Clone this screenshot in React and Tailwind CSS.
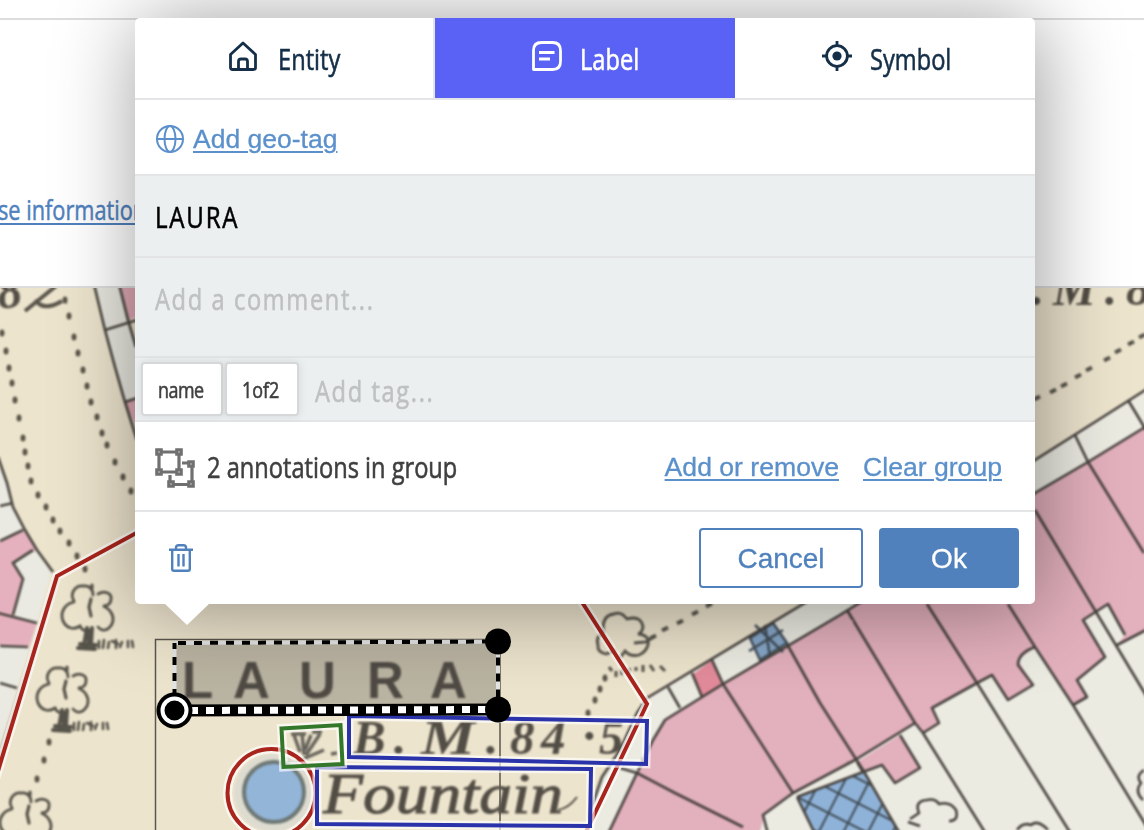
import React from "react";

const pathDots = [
  [2, 333], [6, 351], [9, 368], [12, 383], [15, 400], [19, 418], [23, 438], [25, 452], [28, 466], [31, 481], [38, 495],
  [46, 507], [53, 520], [60, 531], [69, 543], [77, 556], [85, 569], [65, 300], [69, 316], [74, 337], [78, 353], [83, 370],
  [87, 386], [91, 402], [97, 417], [102, 433], [107, 445], [115, 462], [123, 477], [131, 491],
  [49, 742], [44, 760], [37, 779], [605, 678], [600, 689], [595, 700], [588, 713],
];
const slopeDots = [
  [653, 637], [665, 629], [680, 622], [695, 613], [709, 605],
  [1037, 398], [1053, 391], [1064, 385], [1078, 376], [1089, 369], [1107, 359], [1118, 351], [1131, 343], [1142, 336],
];

function Tree({ x, y }) {
  return (
    <g transform={`translate(${x} ${y})`} fill="none" stroke="#56534a" strokeWidth="2.8" strokeLinecap="round">
      <path d="M12 16C7 8 14 0 21 1C27 0 31 4 31 10M36 9C42 5 50 8 49 14C49 19 45 21 41 21C49 24 53 32 50 39C46 46 40 47 36 42M12 17C2 19-2 28 1 36C5 44 12 45 18 41C20 46 25 47 30 44" />
      <path d="M29 14L27 22L29 31M30 0V3" strokeWidth="3.2" />
      <path d="M25 43L22 60M30 43L29 60M27 46V58M16 63L33 64M18 59L34 60" strokeWidth="4" />
      <path d="M37 56V63M42 55L41 63M47 57L46 63M50 56L56 59M54 55V63M60 57L58 62M66 56V62M70 56L71 62" strokeWidth="2.6" />
    </g>
  );
}

function MapView() {
  return (
    <svg className="block w-full flex-1" viewBox="0 288 1144 542" preserveAspectRatio="none">
      <defs>
        <pattern id="hatch" width="22" height="22" patternUnits="userSpaceOnUse" patternTransform="translate(838 792) rotate(27)">
          <path d="M0 0H22M0 0V22" stroke="#3e4a52" strokeWidth="4" />
        </pattern>
        <filter id="ink" x="0" y="0" width="100%" height="100%" colorInterpolationFilters="sRGB">
          <feTurbulence type="fractalNoise" baseFrequency="0.2" numOctaves="2" result="n" />
          <feDisplacementMap in="SourceGraphic" in2="n" scale="1.4" xChannelSelector="R" yChannelSelector="G" />
          <feGaussianBlur stdDeviation="0.8" />
        </filter>
      </defs>
      <g filter="url(#ink)">
        <rect x="-10" y="278" width="1164" height="562" fill="#ede4cd" />
        {/* west parcels */}
        <path d="M-5 457L7 483L13 507L25 530L52 570L0 745H-5Z" fill="#ebeae2" />
        <path d="M-5 543L23 530L37 550L13 563L23 579L13 615L37 623L29 647L-5 645Z" fill="#e5b1be" />
        <path d="M120 280L128 320L137 317V280ZM125 402L137 398V428Z" fill="#dfa9b4" />
        <path d="M94 280L105 330L125 402L137 398V345L128 320L118 280Z" fill="#e8e7df" />
        <g fill="none" stroke="#4c4841" strokeWidth="2.7">
          <path d="M-2 457L7 483L13 507L25 530L37 550L53 572M0 506L13 503M0 541L23 530M33 550L13 563L23 579L13 615M-2 613L37 623M0 646L28 647M0 683L17 688" />
          <path d="M93 280L105 330L115 367L125 402L137 440M118 280L128 320L136 347M105 330L137 320M125 402L137 398" />
        </g>
        <path d="M57 577L-2 763" stroke="#a9a69c" strokeWidth="5" />
        {/* east terrace */}
        <path d="M647 698L803 604L1035 460L1150 387V840H590L590 813L602 777L620 750Z" fill="#ecebe2" />
        <path d="M723 684L840 615L1035 493L1088 462L1150 424V628L1117 645L1125 635L1108 604L1083 620L1105 657L1077 680L1087 697L1073 705L1035 647L1018 660L1033 685L1008 700L992 675L977 683L932 708L939 723L923 733L915 723L855 760L793 793L765 812L758 840H606L637 773L653 740L665 720Z" fill="#e3b0bd" />
        <path d="M857 762L900 735L920 768L895 783L882 765L863 772Z" fill="#e3b0bd" />
        <path d="M692 675L712 660L722 685L702 697Z" fill="#e38b9b" />
        <path d="M750 638L773 623L787 643L760 660Z" fill="#86a6c8" />
        <path d="M750 638L773 623L787 643L760 660ZM755 625L783 652M749 651L783 630M765 625L770 657" fill="none" stroke="#43505a" strokeWidth="2.5" />
        <path d="M797 797L863 772L900 835H815Z" fill="#8fb2d8" />
        <path d="M797 797L863 772L900 835H815Z" fill="url(#hatch)" />
        <g fill="none" stroke="#46413d" strokeWidth="2.6" strokeLinejoin="round">
          <path d="M590 820L592 806L602 777L620 750L637 713L647 698L803 604L1035 460L1095 422L1150 387" />
          <path d="M608 834L637 773L653 740L665 720L723 684L840 615L1035 493L1088 462L1150 424" />
          <path d="M668 687L680 708M692 673L702 697M712 660L723 684L793 793M787 644L820 703L863 770L900 834M847 610L915 723L923 733L986 834M927 604L977 683L1071 834M1008 604L1035 647L1073 705L1150 832M1035 510L1093 607L1150 702M1075 435L1088 462L1144 553M1128 400L1146 430" />
          <path d="M620 768L637 773L675 793L743 827M768 834L763 815L793 793L855 760L915 723M797 797L815 834M797 797L863 772M857 762L863 772L882 765L895 783L920 768L900 735M923 733L939 723L932 708L977 683L992 675L1008 700L1033 685L1018 665Q1018 653 1035 647M1073 705L1087 697L1077 680L1105 657L1083 620L1108 604L1125 635M1117 645L1150 628" />
          <path d="M910 819L919 813Q914 801 927 800Q935 798 939 804Q950 801 956 810Q959 821 949 821M908 822L920 826M1017 830Q1023 822 1031 825Q1038 819 1048 830M1144 770Q1135 776 1141 783Q1134 791 1143 800" />
        </g>
        {/* paths and trees */}
        <g fill="#5a5548">
          {pathDots.map(([x, y]) => <ellipse key={`${x}-${y}`} cx={x} cy={y} rx="2.5" ry="3.5" />)}
        </g>
        <g stroke="#57534a" strokeWidth="4">
          {slopeDots.map(([x, y]) => <path key={x} d={`M${x - 3} ${y + 1.5}L${x + 3} ${y - 1.5}`} />)}
        </g>
        <Tree x={62} y={585} />
        <Tree x={37} y={667} />
        <Tree x={0} y={792} />
        <g fill="none" stroke="#56534a" strokeWidth="2.8">
          <path d="M603 632Q602 615 614 614Q621 611 627 619Q641 615 643 627Q642 633 638 634Q650 635 648 645Q646 652 639 655Q630 657 625 651L620 658M605 632Q595 636 598 645Q597 652 606 654L616 650M634 643L646 642L655 636" />
          <path d="M609 667L612 671M616 671V677M622 669V675M629 668V674M636 667V671M643 665V672M650 665L654 671M660 666L665 671" strokeWidth="3" />
        </g>
        {/* survey lettering */}
        <g fill="#524d45" fontFamily="Liberation Serif, serif" fontStyle="italic" fontWeight="bold">
          <text x="-1" y="309" fontSize="50" transform="rotate(-8 0 309)">8</text>
          <path d="M25 311L56 286M35 300Q44 312 62 301" fill="none" stroke="#5a554c" strokeWidth="4" />
          <text x="1032" y="305" fontSize="48" textLength="118">.M.8</text>
          <text y="754" fontSize="49"><tspan x="353">B</tspan><tspan x="394">.</tspan><tspan x="421" textLength="54" lengthAdjust="spacingAndGlyphs">M</tspan><tspan x="486">.</tspan><tspan x="510">8</tspan><tspan x="541">4</tspan><tspan x="585" dy="-14">.</tspan><tspan x="599" dy="14">5</tspan></text>
          <text x="323" y="813" fontSize="56" fontWeight="normal" stroke="#524d45" strokeWidth="1" textLength="240" lengthAdjust="spacingAndGlyphs">Fountain</text>
          <path d="M558 810Q569 808 577 797" fill="none" stroke="#524d45" strokeWidth="2" />
        </g>
        <path d="M294 735L300 752M302 733L304 755M320 734L306 755M296 762L324 750M331 754L337 753M291 734H306M312 732H322M311 735L305 750" fill="none" stroke="#66635a" strokeWidth="3.5" />
        <circle cx="273" cy="793" r="39" fill="#dedcd0" />
        <circle cx="274" cy="792" r="30" fill="#93b5d8" stroke="#6d7774" strokeWidth="4" />
      </g>

      <path d="M155.500 835V639.500H500V835" fill="none" stroke="#5b574e" strokeWidth="1.5" />

      <g fill="none" strokeLinejoin="miter">
        <path d="M140 531L57 576L-5 781M580 599L647 704L584 836" stroke="#fff" strokeOpacity=".65" strokeWidth="9" />
        <path d="M140 531L57 576L-5 781M580 599L647 704L584 836" stroke="#a9241c" strokeWidth="4" />
        <circle cx="271.500" cy="793" r="44" stroke="#fff" strokeOpacity=".65" strokeWidth="9" />
        <circle cx="271.500" cy="793" r="44" stroke="#a9241c" strokeWidth="4" />
        <path d="M349 716L647 721L646 764L349 757ZM317 767L591 769L590 826L317 824Z" stroke="#fff" strokeOpacity=".65" strokeWidth="9" />
        <path d="M349 716L647 721L646 764L349 757ZM317 767L591 769L590 826L317 824Z" stroke="#2b33ab" strokeWidth="4" />
        <path d="M281.500 728.500L340.500 725L342.500 764L283.500 767Z" stroke="#fff" strokeOpacity=".65" strokeWidth="9" />
        <path d="M281.500 728.500L340.500 725L342.500 764L283.500 767Z" stroke="#33772a" strokeWidth="4" />
      </g>

      <path d="M174.500 643L498 641.500V709.500L174.500 711Z" fill="#252525" fillOpacity=".25" />
      <g filter="url(#ink)" fill="#4f4b44" fontFamily="Liberation Sans, sans-serif" fontWeight="bold">
        <text y="697.500" fontSize="51"><tspan x="182">L</tspan><tspan x="233">A</tspan><tspan x="299">U</tspan><tspan x="367">R</tspan><tspan x="430">A</tspan></text>
      </g>
      <g fill="none" strokeWidth="4">
        <path d="M174.500 711V643L498 641.500V709" stroke="#e4e4e4" />
        <path d="M178 643L498 641.500V709" stroke="#000" strokeDasharray="8 8" />
        <path d="M174.500 711V643" stroke="#000" strokeDasharray="8 8" strokeDashoffset="2" />
        <path d="M174.500 710.500L498 709.500" stroke="#000" strokeWidth="12" />
        <path d="M190 710.500L487 709.500" stroke="#fff" strokeWidth="7" strokeDasharray="8 8" />
      </g>
      <circle cx="498" cy="641.500" r="13" />
      <circle cx="498" cy="709.500" r="13" />
      <circle cx="174.500" cy="710.500" r="18" />
      <circle cx="174.500" cy="710.500" r="12" fill="#000" stroke="#fff" strokeWidth="4" />
    </svg>
  );
}

function Narrow({ box, children }) {
  return (
    <span className={`${box} inline-flex shrink-0 whitespace-nowrap`}>
      <span className="inline-block origin-left scale-x-[0.815] [-webkit-text-stroke:0.6px_currentColor]">{children}</span>
    </span>
  );
}

function HomeIcon() {
  return (
    <svg className="size-[30px]" viewBox="0 0 30 30" fill="none" stroke="currentColor" strokeWidth="2.8" strokeLinejoin="round">
      <path d="M15 2L27.500 13.500V26.500Q27.500 28.500 25.500 28.500H4.500Q2.500 28.500 2.500 26.500V13.500Z" />
      <path d="M10.500 28V20.500Q10.500 18 13 18H17Q19.500 18 19.500 20.500V28" />
    </svg>
  );
}

function LabelIcon() {
  return (
    <svg className="size-[30px]" viewBox="0 0 30 30" fill="none" stroke="currentColor" strokeWidth="2.8" strokeLinejoin="round">
      <path d="M9.500 1.500H20.500Q28.500 1.500 28.500 9.500V20.500Q28.500 28.500 20.500 28.500H1.500V9.500Q1.500 1.500 9.500 1.500Z" />
      <path d="M7 11.500H22.500M7 18H18" />
    </svg>
  );
}

function SymbolIcon() {
  return (
    <svg className="size-[30px]" viewBox="0 0 30 30" fill="none" stroke="currentColor" strokeWidth="2.8">
      <circle cx="15" cy="15" r="10.400" />
      <circle cx="15" cy="15" r="4.600" fill="currentColor" stroke="none" />
      <path d="M15 0V4M15 26V30M0 15H4M26 15H30" />
    </svg>
  );
}

function GlobeIcon() {
  return (
    <svg className="size-7" viewBox="0 0 28 28" fill="none" stroke="currentColor" strokeWidth="2">
      <circle cx="14" cy="14" r="13" />
      <ellipse cx="14" cy="14" rx="5.500" ry="13" />
      <path d="M1 14H27" />
    </svg>
  );
}

function GroupIcon() {
  return (
    <svg className="size-10" viewBox="0 0 40 40" fill="none" stroke="#707070" strokeWidth="3.200">
      <path d="M7 4H21M4 7V21M24 7V21M7 24H21M27 15H33M37 19V33M15 27V33M19 36.500H33" />
      <path d="M1.800 1.800H6.200V6.200H1.800ZM21.800 1.800H26.200V6.200H21.800ZM1.800 21.800H6.200V26.200H1.800ZM21.800 21.800H26.200V26.200H21.800ZM33.800 13.800H38.200V18.200H33.800ZM13.800 33.800H18.200V38.200H13.800ZM33.800 33.800H38.200V38.200H33.800Z" />
    </svg>
  );
}

function TrashIcon() {
  return (
    <svg className="h-7 w-6" viewBox="0 0 24 28" fill="none" stroke="currentColor" strokeWidth="2.4">
      <path d="M0 5.800H24M7 5V3.500Q7 1.200 9.500 1.200H14.500Q17 1.200 17 3.500V5M3.200 6V25Q3.200 26.800 5 26.800H19Q20.800 26.800 20.800 25V6M9.500 10V22.500M14.500 10V22.500" />
    </svg>
  );
}

function Editor() {
  const linkStyle = "text-[#5b90cb] underline decoration-2 underline-offset-[3px] [-webkit-text-stroke:0.3px_currentColor]";
  return (
    <div className="absolute left-[135px] top-[18px] flex h-[586px] w-[900px] flex-col rounded-[5px] bg-white shadow-[4px_4px_84px_rgba(0,0,0,0.4)]">
      <div className="flex h-[82px] border-b-2 border-[#e4e5e7] font-['Open_Sans',sans-serif] text-[29px] text-[#152f49]">
        <button className="flex w-[300px] items-center border-r-2 border-[#e4e5e7] pl-[93px]">
          <div className="mb-1"><HomeIcon /></div>
          <Narrow box="ml-5 mt-0.5 w-[68px]">Entity</Narrow>
        </button>
        <button className="flex w-[300px] items-center bg-[#5962f5] pl-[97px] text-white">
          <div className="mb-1"><LabelIcon /></div>
          <Narrow box="ml-[18px] mt-0.5 w-[64px]">Label</Narrow>
        </button>
        <button className="flex w-[300px] items-center pl-[87px]">
          <div className="mb-1"><SymbolIcon /></div>
          <Narrow box="ml-[18px] mt-0.5 w-[84px]">Symbol</Narrow>
        </button>
      </div>
      <div className="flex h-[76px] items-center gap-[9px] border-b-2 border-[#e4e5e7] pl-[21px] text-[#5b90cb]">
        <div className="pt-1"><GlobeIcon /></div>
        <a className={`${linkStyle} pt-1.5 text-[26.5px]`}>Add geo-tag</a>
      </div>
      <div className="flex h-[82px] items-center border-b-2 border-[#e2e4e6] bg-[#ebeff0] pl-5 pt-0.5 font-['Open_Sans',sans-serif] text-[29.5px] text-black">
        <Narrow box="tracking-[2.2px]">LAURA</Narrow>
      </div>
      <div className="flex h-[100px] border-b-2 border-[#e2e4e6] bg-[#ebeff0] pl-5 pt-[19px] font-['Open_Sans',sans-serif] text-[29px] text-[#bfc0c1]">
        <Narrow box="tracking-[2px]">Add a comment...</Narrow>
      </div>
      <div className="flex h-16 items-center border-b-2 border-[#e2e4e6] bg-[#ebeff0] pl-1.5 font-['Open_Sans',sans-serif]">
        <div className="flex h-[54px] w-[82px] items-center rounded-[4px] border-2 border-[#d5d7d9] bg-white pl-[15px] text-[22px] text-[#3f3f3f] shadow-[0_0_8px_rgba(0,0,0,0.1)]">
          <Narrow box="w-[46px] tracking-[-0.6px]">name</Narrow>
        </div>
        <div className="ml-0.5 flex h-[54px] w-[74px] items-center rounded-[4px] border-2 border-[#d5d7d9] bg-white pl-[15px] text-[22px] text-[#3f3f3f] shadow-[0_0_8px_rgba(0,0,0,0.1)]">
          <Narrow box="w-[38px]">1of2</Narrow>
        </div>
        <div className="ml-4 pt-1 text-[29px] text-[#bfc0c1]"><Narrow box="tracking-[2px]">Add tag...</Narrow></div>
      </div>
      <div className="flex h-[90px] items-center border-b-2 border-[#e4e5e7] pl-5 pr-[33px]">
        <div className="pt-1"><GroupIcon /></div>
        <div className="ml-3 pt-0.5 font-['Open_Sans',sans-serif] text-[29px] text-[#3f3f3f]"><Narrow box="w-[252px]">2 annotations in group</Narrow></div>
        <div className="ml-auto flex gap-6 pt-1 text-[26.6px]">
          <a className={linkStyle}>Add or remove</a>
          <a className={linkStyle}>Clear group</a>
        </div>
      </div>
      <div className="flex flex-1 items-center gap-4 pl-[34px] pr-4 text-[28px] [-webkit-text-stroke:0.3px_currentColor]">
        <div className="mr-auto text-[#5081bd]"><TrashIcon /></div>
        <button className="h-[60px] w-[164px] rounded-[4px] border-2 border-[#5081bd] pt-0.5 text-[#5081bd]">Cancel</button>
        <button className="h-[60px] w-[140px] rounded-[4px] bg-[#5081bd] pt-0.5 text-white">Ok</button>
      </div>
      <svg className="absolute left-[29px] top-[585px] h-[23px] w-[46px]" viewBox="0 0 46 23"><path d="M0 0H46L23 22Z" fill="#fff" /></svg>
    </div>
  );
}

export default function App() {
  return (
    <main className="relative flex h-[830px] w-[1144px] flex-col overflow-hidden bg-white font-['Liberation_Sans',Arial,sans-serif]">
      <header className="flex h-[288px] shrink-0 flex-col border-b-2 border-[#ddd]">
        <div className="h-5 shrink-0 border-b-2 border-[#ddd]" />
        <a className="-ml-0.5 mt-[171px] inline-block w-[190px] origin-left scale-x-[0.82] whitespace-nowrap font-['Open_Sans',sans-serif] text-[26.5px] text-[#5081bd] underline decoration-2 underline-offset-[3px] [-webkit-text-stroke:0.5px_currentColor]">se information</a>
      </header>
      <MapView />
      <Editor />
    </main>
  );
}
